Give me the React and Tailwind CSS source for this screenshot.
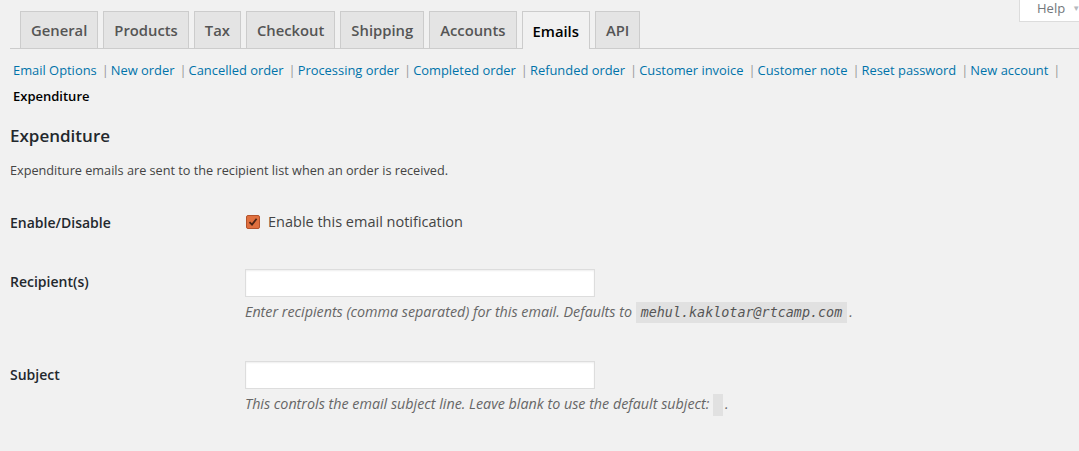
import { useState } from 'react';

const tabs = ['General', 'Products', 'Tax', 'Checkout', 'Shipping', 'Accounts', 'Emails', 'API'];
const links = [
  'Email Options',
  'New order',
  'Cancelled order',
  'Processing order',
  'Completed order',
  'Refunded order',
  'Customer invoice',
  'Customer note',
  'Reset password',
  'New account',
];

function Checkbox({ checked, onChange }) {
  return (
    <button
      type="button"
      onClick={onChange}
      className="w-[14px] h-[14px] rounded-[2px] border border-[#b4532c] bg-[#e0703f] flex items-center justify-center shrink-0"
    >
      {checked && (
        <svg width="10" height="10" viewBox="0 0 10 10">
          <path d="M1.5 5.2 L4 7.6 L8.6 1.8" fill="none" stroke="#4b2414" strokeWidth="1.8" />
        </svg>
      )}
    </button>
  );
}

export default function App() {
  const [active, setActive] = useState('Emails');
  const [enabled, setEnabled] = useState(true);

  return (
    <div className="relative min-h-[451px] bg-[#f1f1f1] font-['Open_Sans',sans-serif] text-[13px] text-[#444]">
      {/* Help tab */}
      <div className="absolute top-0 right-0 w-[60px] h-[22px] bg-white border-l border-b border-[#dcdcdc] pl-[17px] flex items-start gap-[7px] text-[13px] leading-[16px] text-[#72777c]">
        <span>Help</span>
        <span className="text-[8px] leading-[16px] text-[#b4b9be]">▼</span>
      </div>

      {/* Tabs */}
      <div className="pt-[11px] ml-[10px] pl-[10px] flex gap-[5px] border-b border-[#ccc]">
        {tabs.map((t) => (
          <button
            key={t}
            onClick={() => setActive(t)}
            className={`h-[37px] px-[10px] border border-b-0 border-[#ccc] text-[14.8px] font-semibold leading-[24px] -mb-px ${
              active === t ? 'bg-[#f1f1f1] text-black h-[38px]' : 'bg-[#e4e4e4] text-[#555]'
            }`}
          >
            {t}
          </button>
        ))}
      </div>

      <div className="px-[10px]">
        {/* Sub links */}
        <div className="mt-[8px] pl-[3px] flex flex-wrap leading-[26px] text-[12.9px]">
          {links.map((l) => (
            <span key={l} className="whitespace-nowrap">
              <a href="#" className="text-[#0073aa]">{l}</a>
              <span className="ml-[5px] mr-[2px] text-[#999]">|</span>
            </span>
          ))}
          <span className="font-semibold text-black text-[13px]">Expenditure</span>
        </div>

        {/* Section */}
        <h2 className="mt-[16px] text-[17px] leading-[22px] font-semibold text-[#23282d]">Expenditure</h2>
        <p className="mt-[13px] leading-[20px] text-[12.7px] text-[#444]">
          Expenditure emails are sent to the recipient list when an order is received.
        </p>

        {/* Enable/Disable */}
        <div className="mt-[32px] flex">
          <div className="w-[235px] text-[14px] font-semibold leading-[20px] pt-[1px] text-[#23282d]">Enable/Disable</div>
          <label className="flex items-center gap-[8px] text-[14.5px] leading-[20px] text-[#444] pl-[1px] -mt-[1px]">
            <Checkbox checked={enabled} onChange={() => setEnabled(!enabled)} />
            Enable this email notification
          </label>
        </div>

        {/* Recipients */}
        <div className="mt-[36px] flex">
          <div className="w-[235px] text-[14px] font-semibold leading-[20px] pt-[3px] text-[#23282d]">Recipient(s)</div>
          <div>
            <input
              type="text"
              className="w-[350px] h-[28px] bg-white border border-[#ddd] shadow-[inset_0_1px_2px_rgba(0,0,0,0.07)] outline-none px-2"
            />
            <p className="mt-[4px] italic leading-[22px] text-[14.3px] text-[#666]">
              Enter recipients (comma separated) for this email. Defaults to{' '}
              <code className="bg-[#e1e1e1] px-[5px] py-[3px] mr-[2px] font-['DejaVu_Sans_Mono',monospace] italic text-[13.4px] text-[#555]">
                mehul.kaklotar@rtcamp.com
              </code>
              .
            </p>
          </div>
        </div>

        {/* Subject */}
        <div className="mt-[37px] flex">
          <div className="w-[235px] text-[14px] font-semibold leading-[20px] pt-[4px] text-[#23282d]">Subject</div>
          <div>
            <input
              type="text"
              className="w-[350px] h-[28px] bg-white border border-[#ddd] shadow-[inset_0_1px_2px_rgba(0,0,0,0.07)] outline-none px-2"
            />
            <p className="mt-[4px] italic leading-[22px] text-[14.3px] text-[#666]">
              This controls the email subject line. Leave blank to use the default subject:{' '}
              <code className="inline-block align-middle bg-[#e1e1e1] w-[10px] h-[22px] mr-[2px]"></code>
              .
            </p>
          </div>
        </div>
      </div>
    </div>
  );
}
